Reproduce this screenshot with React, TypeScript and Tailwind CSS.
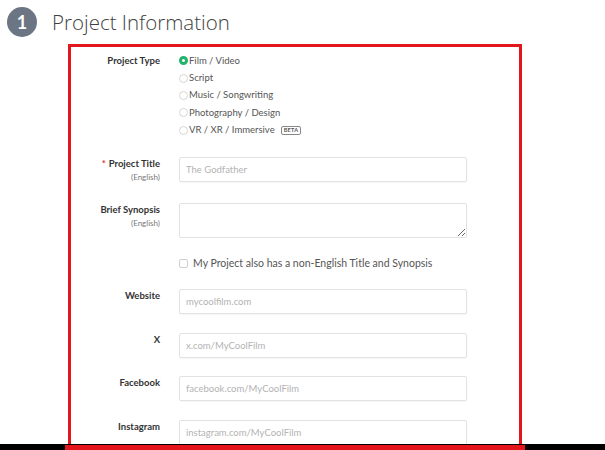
import React from "react";

const font = { fontFamily: "Lato, 'Open Sans', sans-serif" };

const projectTypes = [
  { label: "Film / Video", checked: true },
  { label: "Script" },
  { label: "Music / Songwriting" },
  { label: "Photography / Design" },
  { label: "VR / XR / Immersive", beta: true },
];

const socials = [
  { label: "Website", placeholder: "mycoolfilm.com" },
  { label: "X", placeholder: "x.com/MyCoolFilm" },
  { label: "Facebook", placeholder: "facebook.com/MyCoolFilm" },
  { label: "Instagram", placeholder: "instagram.com/MyCoolFilm" },
];

function Radio({ checked }: { checked?: boolean }) {
  return checked ? (
    <span className="box-border h-[9px] w-[9px] shrink-0 rounded-full border-[3px] border-[#21b26c] bg-white" />
  ) : (
    <span className="box-border h-[9px] w-[9px] shrink-0 rounded-full border border-[#d6d6d6] bg-white" />
  );
}

function Label({ text, sub, required }: { text: string; sub?: string; required?: boolean }) {
  return (
    <div className="flex flex-col items-end text-right">
      <span className="text-[9.5px] font-bold leading-[14px] text-[#333]">
        {required && <span className="mr-[3px] text-[#d9333a]">*</span>}
        {text}
      </span>
      {sub && <span className="text-[8px] leading-[12px] text-[#777]">{sub}</span>}
    </div>
  );
}

function TextInput({ placeholder }: { placeholder?: string }) {
  return (
    <input
      type="text"
      placeholder={placeholder}
      className="box-border block h-[25px] w-[288px] rounded-[2px] border border-[#e2e2e2] bg-white px-[6px] text-[9.5px] text-[#555] shadow-[0_1px_1px_rgba(0,0,0,0.04)] outline-none placeholder:text-[#b3b3b3]"
      style={font}
    />
  );
}

export default function App() {
  return (
    <div className="relative h-[450px] w-[605px] overflow-hidden bg-white" style={font}>
      {/* step header */}
      <div className="flex items-center gap-[15px] pl-[7px] pt-[7px]">
        <div className="flex h-[30px] w-[30px] items-center justify-center rounded-full bg-[#6b7583] text-[18px] font-bold text-white">
          1
        </div>
        <h1
          className="text-[20.5px] font-light leading-[30px] text-[#3f3f3f]"
          style={{ fontFamily: "'Open Sans', Lato, sans-serif" }}
        >
          Project Information
        </h1>
      </div>

      {/* highlighted form */}
      <div className="ml-[68px] mt-[7px] h-[420px] w-[454px] border-[3px] border-b-0 border-[#e3161b]">
        <div className="grid grid-cols-[89px_288px] items-start gap-x-[19px] pt-[5px]">
          <div className="text-right text-[9.5px] font-bold leading-[17.4px] text-[#333]">Project Type</div>
          <div className="flex flex-col">
            {projectTypes.map((t) => (
              <label key={t.label} className="flex h-[17.4px] items-center text-[9.5px] text-[#555]">
                <Radio checked={t.checked} />
                <span className="ml-px">{t.label}</span>
                {t.beta && (
                  <span className="ml-[6px] rounded-[2px] border border-[#888] px-[2px] text-[5.5px] font-bold leading-[7px] tracking-[0.3px] text-[#555]">
                    BETA
                  </span>
                )}
              </label>
            ))}
          </div>

          <div className="mt-[18px]">
            <Label text="Project Title" sub="(English)" required />
          </div>
          <div className="mt-[18px]">
            <TextInput placeholder="The Godfather" />
          </div>

          <div className="mt-[20px]">
            <Label text="Brief Synopsis" sub="(English)" />
          </div>
          <div className="mt-[20px]">
            <textarea
              className="box-border block h-[35px] w-[288px] rounded-[2px] border border-[#e2e2e2] bg-white px-[6px] text-[9.5px] outline-none"
              style={font}
            />
          </div>

          <div />
          <label className="mt-[17px] flex h-[17px] items-center gap-[5px] text-[10.5px] text-[#555]">
            <span className="box-border h-[9px] w-[9px] shrink-0 rounded-[2px] border border-[#cfcfcf] bg-white" />
            My Project also has a non-English Title and Synopsis
          </label>

          {socials.map((s, i) => (
            <React.Fragment key={s.label}>
              <div className={i === 0 ? "mt-[17px]" : "mt-[18.6px]"}>
                <Label text={s.label} />
              </div>
              <div className={i === 0 ? "mt-[17px]" : "mt-[18.6px]"}>
                <TextInput placeholder={s.placeholder} />
              </div>
            </React.Fragment>
          ))}
        </div>
      </div>

      {/* cropped bottom edge of the screenshot */}
      <div className="absolute bottom-0 left-0 h-[6px] w-full bg-black">
        <div className="absolute bottom-0 left-[65px] h-[5px] w-[460px] bg-[#e3161b]" />
      </div>
    </div>
  );
}
